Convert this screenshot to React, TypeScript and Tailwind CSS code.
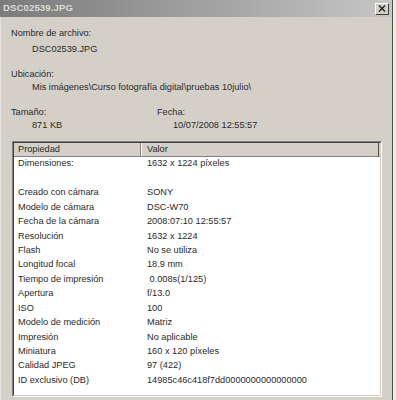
import React from "react";

const rows: [string, string][] = [
  ["Dimensiones:", "1632 x 1224 píxeles"],
  ["", ""],
  ["Creado con cámara", "SONY"],
  ["Modelo de cámara", "DSC-W70"],
  ["Fecha de la cámara", "2008:07:10 12:55:57"],
  ["Resolución", "1632 x 1224"],
  ["Flash", "No se utiliza"],
  ["Longitud focal", "18.9 mm"],
  ["Tiempo de impresión", " 0.008s(1/125)"],
  ["Apertura", "f/13.0"],
  ["ISO", "100"],
  ["Modelo de medición", "Matriz"],
  ["Impresión", "No aplicable"],
  ["Miniatura", "160 x 120 píxeles"],
  ["Calidad JPEG", "97 (422)"],
  ["ID exclusivo (DB)", "14985c46c418f7dd0000000000000000"],
];

export default function App() {
  return (
    <div
      className="w-[396px] h-[400px] bg-[#ecebe6] flex overflow-hidden text-[#2a2a2a]"
      style={{ fontFamily: '"Liberation Sans", Arial, sans-serif', fontSize: "9.2px" }}
    >
      <div className="w-[393px] h-[400px] bg-[#d4d0c8] border-r border-[#505050] flex flex-col">
        {/* title bar */}
        <div className="h-[17px] flex items-center justify-between bg-gradient-to-r from-[#7b7b7b] to-[#c6c6c6] pl-[3px] pr-[3px]">
          <span className="text-[#dcdad4] font-bold text-[9.6px] tracking-[0.1px]">DSC02539.JPG</span>
          <div className="w-[14px] h-[12px] bg-[#d4d0c8] border-t border-l border-white border-r border-b border-r-[#404040] border-b-[#404040] flex items-center justify-center">
            <svg width="8" height="7" viewBox="0 0 8 7">
              <path d="M1 0.5 L7 6.5 M7 0.5 L1 6.5" stroke="#222" strokeWidth="1.4" />
            </svg>
          </div>
        </div>
        <div className="flex-1 flex flex-col border-l border-[#e4e2dc] pl-[10px] pr-[10px]">
          <div className="mt-[10px] leading-[13px]">Nombre de archivo:</div>
          <div className="mt-[3px] pl-[21px] leading-[13px]">DSC02539.JPG</div>
          <div className="mt-[12px] leading-[13px]">Ubicación:</div>
          <div className="mt-[0px] pl-[21px] leading-[13px]">Mis imágenes\Curso fotografía digital\pruebas 10julio\</div>
          <div className="mt-[12px] leading-[13px] flex">
            <span className="w-[146px]">Tamaño:</span>
            <span>Fecha:</span>
          </div>
          <div className="mt-[0px] leading-[13px] flex">
            <span className="w-[141px] pl-[21px]">871 KB</span>
            <span className="pl-[21px]">10/07/2008 12:55:57</span>
          </div>
          <div className="mt-[9px] ml-[1px] w-[370px] h-[256px] border-t border-l border-[#808080] border-b border-r border-b-white border-r-white">
            <div className="w-full h-full bg-white border-t border-l border-[#404040] border-b border-r border-b-[#d4d0c8] border-r-[#d4d0c8] flex flex-col">
              <div className="h-[14px] flex bg-[#d4d0c8] border-b border-[#808080]">
                <div className="w-[127px] pl-[4px] flex items-center border-r border-[#808080]">Propiedad</div>
                <div className="flex-1 pl-[5px] flex items-center border-l border-white border-r border-r-[#505050] mr-[1px]">Valor</div>
              </div>
              {rows.map(([k, v], i) => (
                <div key={i} className="h-[14.45px] flex items-center">
                  <div className="w-[128px] pl-[4px] whitespace-pre">{k}</div>
                  <div className="pl-[5px] whitespace-pre">{v}</div>
                </div>
              ))}
            </div>
          </div>
        </div>
      </div>
    </div>
  );
}
